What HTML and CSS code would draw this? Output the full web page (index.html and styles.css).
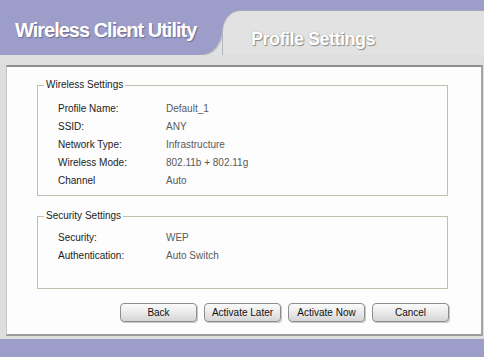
FILE: index.html
```html
<!DOCTYPE html>
<html lang="en">
<head>
  <meta charset="UTF-8">
  <title>Wireless Client Utility</title>
  <link rel="stylesheet" href="styles.css">
</head>
<body>

<div class="app">
  <div class="header">
    <div class="tab">
      <h1>Wireless Client Utility</h1>
    </div>
    <div class="banner-wrap">
      <div class="banner">
        <h2>Profile Settings</h2>
      </div>
    </div>
  </div>

  <div class="main">
    <div class="content">
      <fieldset class="group first">
        <legend>Wireless Settings</legend>
        <div class="rows">
          <span class="label">Profile Name:</span><span class="value">Default_1</span>
          <span class="label">SSID:</span><span class="value">ANY</span>
          <span class="label">Network Type:</span><span class="value">Infrastructure</span>
          <span class="label">Wireless Mode:</span><span class="value">802.11b + 802.11g</span>
          <span class="label">Channel</span><span class="value">Auto</span>
        </div>
      </fieldset>

      <fieldset class="group second">
        <legend>Security Settings</legend>
        <div class="rows">
          <span class="label">Security:</span><span class="value">WEP</span>
          <span class="label">Authentication:</span><span class="value">Auto Switch</span>
        </div>
      </fieldset>

      <div class="buttons">
        <button>Back</button>
        <button>Activate Later</button>
        <button>Activate Now</button>
        <button>Cancel</button>
      </div>
    </div>
  </div>

  <div class="footer"></div>
</div>

</body>
</html>
```

FILE: styles.css
```css
* {
  box-sizing: border-box;
  margin: 0;
  padding: 0;
}

body {
  background: #9d9dca;
  font-family: 'Liberation Sans', Arial, sans-serif;
}

.app {
  width: 484px;
  height: 357px;
  display: flex;
  flex-direction: column;
  background: #9d9dca;
  overflow: hidden;
}

/* Cabeçalho com a aba roxa e a faixa cinza */
.header {
  height: 55px;
  display: flex;
  background: #e2e2e2;
}

.tab {
  width: 222px;
  background: #9d9dca;
  border-bottom-right-radius: 22px 26px;
  padding: 20px 0 0 15px;
  box-shadow: 1px 1px 1px rgba(0,0,0,0.18);
}

.tab h1 {
  font-size: 20px;
  line-height: 20px;
  font-weight: bold;
  letter-spacing: -1px;
  color: #fff;
  text-shadow: 1px 1px 1px rgba(60,60,90,0.5);
  white-space: nowrap;
}

.banner-wrap {
  flex: 1;
  display: flex;
  background: #9d9dca;
}

.banner {
  flex: 1;
  margin-top: 10px;
  background: #e2e2e2;
  border-top: 1px solid #a9a9b4;
  border-left: 1px solid #b4b4be;
  border-top-left-radius: 18px 22px;
  padding: 19px 0 0 28px;
}

.banner h2 {
  font-size: 18px;
  line-height: 18px;
  font-weight: bold;
  letter-spacing: -0.5px;
  color: #fff;
  text-shadow: 1px 1px 1px #8a8a8a, 0 0 1px #9a9a9a;
}

/* Área principal */
.main {
  flex: 1;
  background: #dedede;
  padding: 10px 1px 3px 6px;
  display: flex;
}

.content {
  flex: 1;
  background: #fdfdfd;
  border-top: 2px solid #8f8f8f;
  border-left: 1px solid #c4c4c4;
  border-right: 2px solid #a4a4a4;
  border-bottom: 2px solid #9c9c9c;
  padding: 0 33px 0 30px;
}

.group {
  border: 1px solid #c2bfb1;
  padding: 0;
}

.group legend {
  font-size: 10px;
  line-height: 12px;
  color: #222;
  margin-left: 6px;
  padding: 0 2px;
}

.first {
  margin-top: 12px;
  padding: 8px 0 6px 0;
}

.second {
  margin-top: 14px;
  padding: 6px 0 24px 0;
}

.rows {
  display: grid;
  grid-template-columns: 108px 1fr;
  grid-auto-rows: 18px;
  align-items: center;
  font-size: 10px;
  padding-left: 20px;
}

.label {
  color: #1c1c1c;
}

.value {
  color: #5a5a5a;
}

.buttons {
  display: flex;
  justify-content: flex-end;
  gap: 7px;
  margin-top: 14px;
  margin-right: -1px;
}

.buttons button {
  width: 77px;
  height: 19px;
  font-family: 'Liberation Sans', Arial, sans-serif;
  font-size: 10px;
  color: #111;
  background: linear-gradient(#fbfbfb, #ececec 45%, #d6d6d6);
  border: 1px solid #8e8e8e;
  border-radius: 4px;
  box-shadow: 1px 1px 0 #c8c8c8;
  cursor: pointer;
}

.footer {
  height: 18px;
  background: #9d9dca;
}
```
